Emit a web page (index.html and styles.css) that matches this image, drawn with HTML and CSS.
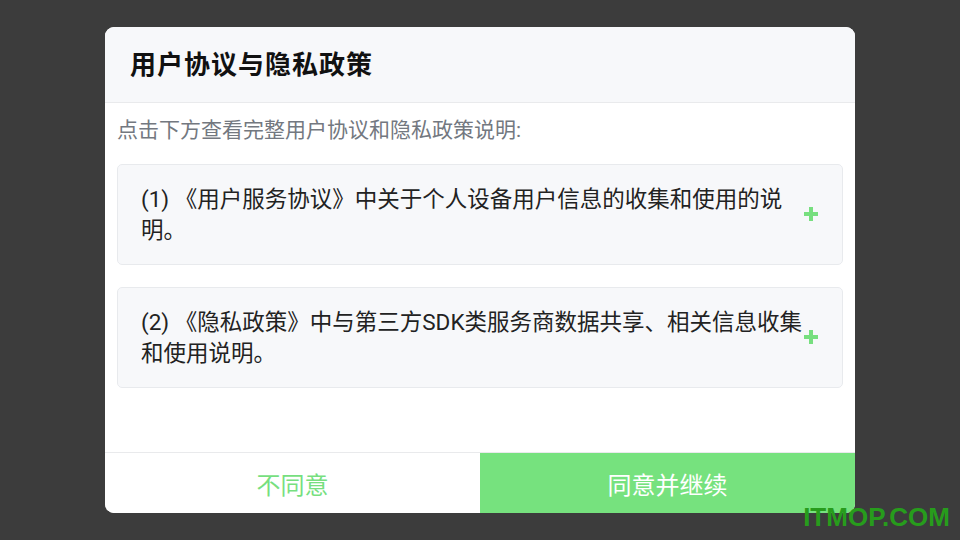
FILE: index.html
```html
<!DOCTYPE html>
<html lang="zh-CN">
<head>
<meta charset="utf-8">
<title>用户协议与隐私政策</title>
<link rel="stylesheet" href="styles.css">
</head>
<body>
<div class="screen">
  <div class="dialog">
    <div class="dialog-header">
      <h1 class="dialog-title">用户协议与隐私政策</h1>
    </div>
    <div class="dialog-body">
      <p class="hint">点击下方查看完整用户协议和隐私政策说明:</p>
      <div class="item">
        <div class="item-text">(1) 《用户服务协议》中关于个人设备用户信息的收集和使用的说明。</div>
        <svg class="item-plus" width="14" height="14" viewBox="0 0 14 14"><path d="M7 0v14M0 7h14" stroke="currentColor" stroke-width="4"/></svg>
      </div>
      <div class="item">
        <div class="item-text">(2) 《隐私政策》中与第三方SDK类服务商数据共享、相关信息收集和使用说明。</div>
        <svg class="item-plus" width="14" height="14" viewBox="0 0 14 14"><path d="M7 0v14M0 7h14" stroke="currentColor" stroke-width="4"/></svg>
      </div>
    </div>
    <div class="dialog-footer">
      <button class="btn btn-decline">不同意</button>
      <button class="btn btn-accept">同意并继续</button>
    </div>
  </div>
  <div class="watermark">ITMOP.COM</div>
</div>
</body>
</html>
```
FILE: styles.css
```css
* { box-sizing: border-box; }

html, body {
  margin: 0;
  padding: 0;
  width: 960px;
  height: 540px;
  overflow: hidden;
  background: #3c3c3c;
  font-family: Roboto, "Noto Sans CJK SC", sans-serif;
}

.screen {
  position: relative;
  width: 960px;
  height: 540px;
  display: flex;
  align-items: center;
  justify-content: center;
}

.dialog {
  width: 750px;
  height: 486px;
  background: #ffffff;
  border-radius: 9px;
  overflow: hidden;
  display: flex;
  flex-direction: column;
}

.dialog-header {
  height: 76px;
  flex: none;
  background: #f7f8fa;
  border-bottom: 1px solid #e9eaec;
  display: flex;
  align-items: center;
  padding: 0 25px 5px;
}

.dialog-title {
  margin: 0;
  font-size: 26px;
  font-weight: 700;
  color: #111111;
  letter-spacing: 1px;
}

.dialog-body {
  flex: 1;
  padding: 12px 12px 0;
}

.hint {
  margin: 0 0 19px;
  font-size: 21px;
  line-height: 30px;
  color: #737880;
}

.item {
  height: 101px;
  margin-bottom: 22px;
  background: #f7f8fa;
  border: 1px solid #e8eaed;
  border-radius: 5px;
  display: flex;
  align-items: center;
  padding: 0 24px 0 23px;
}

.item-text {
  flex: 1;
  font-size: 22.5px;
  line-height: 31px;
  color: #222222;
}

.item-plus {
  flex: none;
  color: #77df7f;
  margin-top: -2px;
}

.dialog-footer {
  height: 61px;
  flex: none;
  border-top: 1px solid #e9eaec;
  display: flex;
}

.btn {
  flex: 1;
  border: 0;
  margin: 0;
  padding: 0;
  font-family: Roboto, "Noto Sans CJK SC", sans-serif;
  font-size: 24px;
  cursor: pointer;
}

.btn-decline {
  background: #ffffff;
  color: #77df7f;
}

.btn-accept {
  background: #76e27e;
  color: #ffffff;
}

.watermark {
  position: absolute;
  right: 10px;
  bottom: 10px;
  font-family: "Liberation Sans", sans-serif;
  font-size: 26px;
  font-weight: 700;
  line-height: 26px;
  color: #279c1c;
}
```
